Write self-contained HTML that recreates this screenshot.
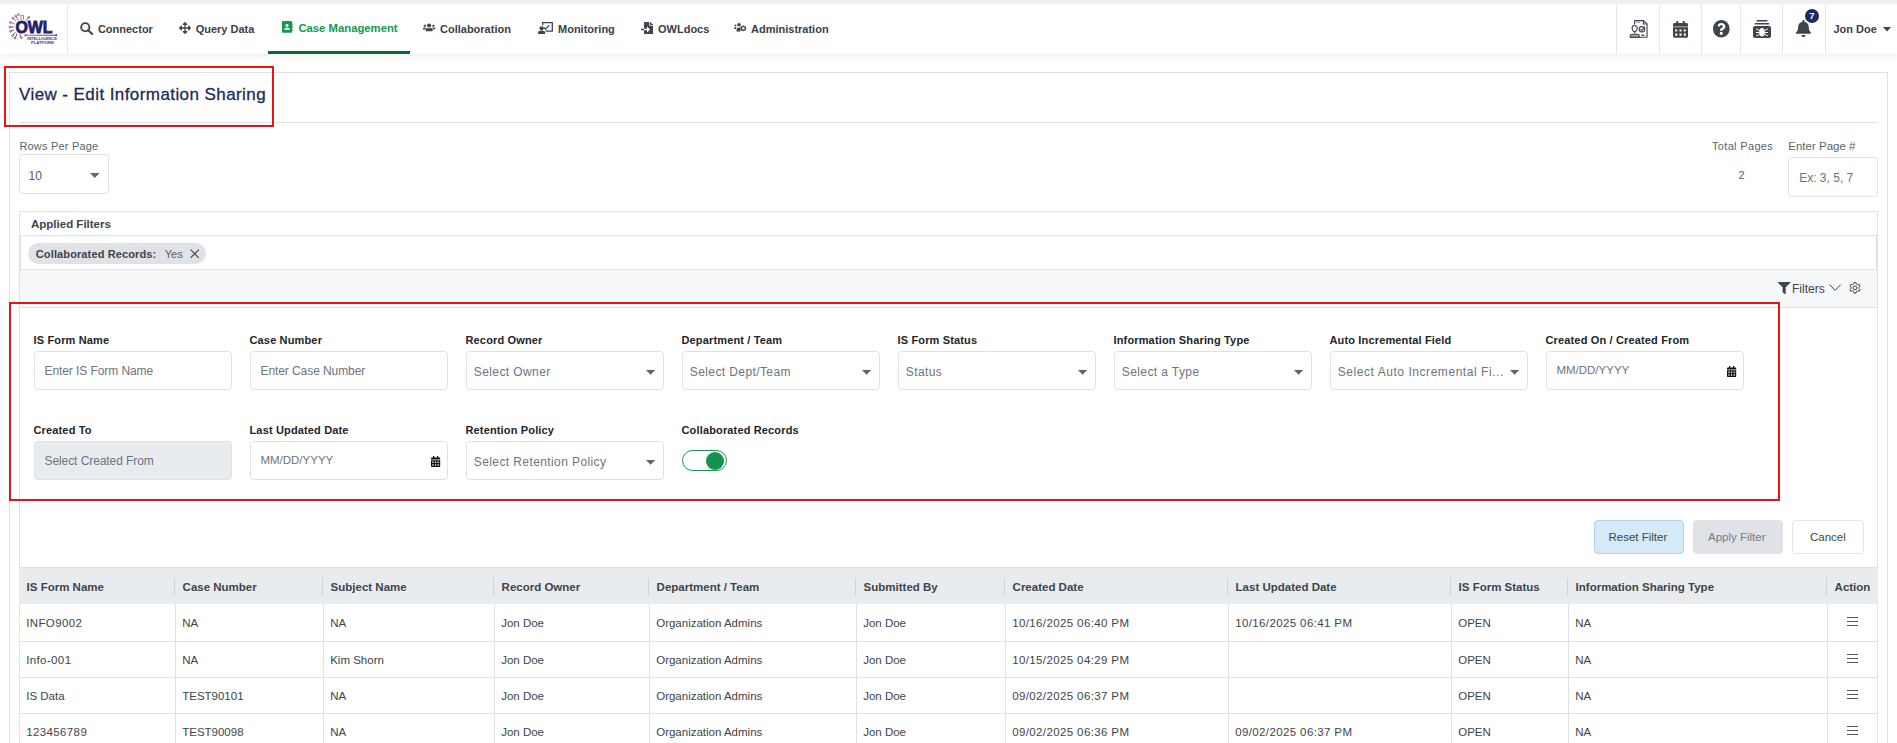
<!DOCTYPE html><html><head><meta charset="utf-8"><style>
html,body{margin:0;padding:0;}
body{width:1897px;height:743px;overflow:hidden;position:relative;background:#fff;font-family:"Liberation Sans", sans-serif;}
.t{position:absolute;white-space:nowrap;}
.r{position:absolute;box-sizing:border-box;}
svg{position:absolute;overflow:visible;}
</style></head><body>
<div class="r" style="left:0px;top:0px;width:1897px;height:4px;background:#f1f1f1;"></div>
<div class="r" style="left:0px;top:4px;width:1897px;height:50px;background:#fff;border-top-left-radius:12px;box-shadow:0 3px 6px rgba(0,0,0,0.06);"></div>
<div class="r" style="left:67px;top:4px;width:1px;height:50px;background:#e3e6ea;"></div>
<div class="t" style="left:97.9px;top:23.69px;font-size:11px;line-height:11px;color:#3a4048;font-weight:bold;">Connector</div>
<div class="t" style="left:195.7px;top:23.69px;font-size:11px;line-height:11px;color:#3a4048;font-weight:bold;">Query Data</div>
<div class="t" style="left:298.4px;top:22.73px;font-size:11.3px;line-height:11.3px;color:#129a4f;font-weight:bold;">Case Management</div>
<div class="t" style="left:440px;top:23.69px;font-size:11px;line-height:11px;color:#3a4048;font-weight:bold;">Collaboration</div>
<div class="t" style="left:558px;top:23.69px;font-size:11px;line-height:11px;color:#3a4048;font-weight:bold;">Monitoring</div>
<div class="t" style="left:658px;top:23.69px;font-size:11px;line-height:11px;color:#3a4048;font-weight:bold;">OWLdocs</div>
<div class="t" style="left:751px;top:23.69px;font-size:11px;line-height:11px;color:#3a4048;font-weight:bold;">Administration</div>
<div class="r" style="left:268px;top:51px;width:142px;height:3px;background:#086a33;"></div>
<div class="r" style="left:1616px;top:4px;width:1px;height:50px;background:#e3e6ea;"></div>
<div class="r" style="left:1659px;top:4px;width:1px;height:50px;background:#e3e6ea;"></div>
<div class="r" style="left:1701px;top:4px;width:1px;height:50px;background:#e3e6ea;"></div>
<div class="r" style="left:1740px;top:4px;width:1px;height:50px;background:#e3e6ea;"></div>
<div class="r" style="left:1782px;top:4px;width:1px;height:50px;background:#e3e6ea;"></div>
<div class="r" style="left:1825px;top:4px;width:1px;height:50px;background:#e3e6ea;"></div>
<div class="t" style="left:1833.4px;top:23.79px;font-size:11px;line-height:11px;color:#3a4048;font-weight:bold;">Jon Doe</div>
<div class="r" style="left:9px;top:72px;width:1879px;height:700px;border:1px solid #dee2e6;background:#fff;"></div>
<div class="t" style="left:19px;top:86.41px;font-size:17px;line-height:17px;color:#1c2a5c;letter-spacing:0.42px;-webkit-text-stroke:0.3px #1c2a5c;">View - Edit Information Sharing</div>
<div class="r" style="left:19px;top:122px;width:1859px;height:1px;background:#dee2e6;"></div>
<div class="t" style="left:19.4px;top:140.69px;font-size:11px;line-height:11px;color:#5c636b;letter-spacing:0.2px;">Rows Per Page</div>
<div class="r" style="left:19px;top:154px;width:90px;height:40px;border:1px solid #dee2e6;border-radius:4px;"></div>
<div class="t" style="left:28.4px;top:169.84px;font-size:12px;line-height:12px;color:#555c64;letter-spacing:0.3px;">10</div>
<svg style="left:90px;top:172.7px" width="9.60" height="5.00" viewBox="0 0 10 5" preserveAspectRatio="none"><path d="M0 0 H10 L5 5Z" fill="#666"/></svg>
<div class="t" style="left:1712px;top:140.69px;font-size:11px;line-height:11px;color:#5c636b;letter-spacing:0.33px;">Total Pages</div>
<div class="t" style="left:1541.5px;width:400px;text-align:center;top:170.29px;font-size:11px;line-height:11px;color:#5c636b;">2</div>
<div class="t" style="left:1788.3px;top:141.16px;font-size:11.5px;line-height:11.5px;color:#5c636b;">Enter Page #</div>
<div class="r" style="left:1788px;top:157px;width:90px;height:40px;border:1px solid #dee2e6;border-radius:4px;"></div>
<div class="t" style="left:1799.2px;top:171.64px;font-size:12px;line-height:12px;color:#6c737b;">Ex: 3, 5, 7</div>
<div class="r" style="left:19px;top:211px;width:1859px;height:600px;border:1px solid #dee2e6;"></div>
<div class="t" style="left:31px;top:218.56px;font-size:11.5px;line-height:11.5px;color:#3e444b;font-weight:bold;">Applied Filters</div>
<div class="r" style="left:19px;top:235px;width:1859px;height:1px;background:#dee2e6;"></div>
<div class="r" style="left:20px;top:235px;width:1857px;height:35px;border-left:1px solid #dee2e6;border-right:1px solid #dee2e6;"></div>
<div class="r" style="left:19px;top:269px;width:1859px;height:1px;background:#dee2e6;"></div>
<div class="r" style="left:28px;top:243px;width:178px;height:21px;background:#dfe2e6;border-radius:11px;"></div>
<div class="t" style="left:35.8px;top:249.19px;font-size:11px;line-height:11px;color:#3e444b;font-weight:bold;letter-spacing:0.12px;">Collaborated Records:</div>
<div class="t" style="left:164.8px;top:249.19px;font-size:11px;line-height:11px;color:#555c64;">Yes</div>
<div class="r" style="left:20px;top:270px;width:1857px;height:37px;background:#f6f7f9;"></div>
<div class="r" style="left:19px;top:307px;width:1859px;height:1px;background:#dee2e6;"></div>
<div class="t" style="left:1792px;top:282.54px;font-size:12px;line-height:12px;color:#3e444b;">Filters</div>
<div class="t" style="left:33.5px;top:334.99px;font-size:11px;line-height:11px;color:#212529;font-weight:bold;letter-spacing:0.15px;">IS Form Name</div>
<div class="r" style="left:34px;top:351px;width:198px;height:39px;border:1px solid #dee2e6;border-radius:4px;background:#fff;"></div>
<div class="t" style="left:44.5px;top:365.04px;font-size:12px;line-height:12px;color:#6c757d;letter-spacing:-0.08px;">Enter IS Form Name</div>
<div class="t" style="left:249.5px;top:334.99px;font-size:11px;line-height:11px;color:#212529;font-weight:bold;letter-spacing:0.15px;">Case Number</div>
<div class="r" style="left:250px;top:351px;width:198px;height:39px;border:1px solid #dee2e6;border-radius:4px;background:#fff;"></div>
<div class="t" style="left:260.5px;top:365.04px;font-size:12px;line-height:12px;color:#6c757d;letter-spacing:-0.08px;">Enter Case Number</div>
<div class="t" style="left:465.5px;top:334.99px;font-size:11px;line-height:11px;color:#212529;font-weight:bold;letter-spacing:0.15px;">Record Owner</div>
<div class="r" style="left:466px;top:351px;width:198px;height:39px;border:1px solid #dee2e6;border-radius:4px;background:#fff;"></div>
<div class="t" style="left:473.8px;top:366.44px;font-size:12px;line-height:12px;color:#6c757d;letter-spacing:0.4px;">Select Owner</div>
<svg style="left:645.6px;top:370px" width="9.20" height="4.80" viewBox="0 0 10 5" preserveAspectRatio="none"><path d="M0 0 H10 L5 5Z" fill="#666"/></svg>
<div class="t" style="left:681.5px;top:334.99px;font-size:11px;line-height:11px;color:#212529;font-weight:bold;letter-spacing:0.15px;">Department / Team</div>
<div class="r" style="left:682px;top:351px;width:198px;height:39px;border:1px solid #dee2e6;border-radius:4px;background:#fff;"></div>
<div class="t" style="left:689.8px;top:366.44px;font-size:12px;line-height:12px;color:#6c757d;letter-spacing:0.4px;">Select Dept/Team</div>
<svg style="left:861.6px;top:370px" width="9.20" height="4.80" viewBox="0 0 10 5" preserveAspectRatio="none"><path d="M0 0 H10 L5 5Z" fill="#666"/></svg>
<div class="t" style="left:897.5px;top:334.99px;font-size:11px;line-height:11px;color:#212529;font-weight:bold;letter-spacing:0.15px;">IS Form Status</div>
<div class="r" style="left:898px;top:351px;width:198px;height:39px;border:1px solid #dee2e6;border-radius:4px;background:#fff;"></div>
<div class="t" style="left:905.8px;top:366.44px;font-size:12px;line-height:12px;color:#6c757d;letter-spacing:0.4px;">Status</div>
<svg style="left:1077.6px;top:370px" width="9.20" height="4.80" viewBox="0 0 10 5" preserveAspectRatio="none"><path d="M0 0 H10 L5 5Z" fill="#666"/></svg>
<div class="t" style="left:1113.5px;top:334.99px;font-size:11px;line-height:11px;color:#212529;font-weight:bold;letter-spacing:0.15px;">Information Sharing Type</div>
<div class="r" style="left:1114px;top:351px;width:198px;height:39px;border:1px solid #dee2e6;border-radius:4px;background:#fff;"></div>
<div class="t" style="left:1121.8px;top:366.44px;font-size:12px;line-height:12px;color:#6c757d;letter-spacing:0.4px;">Select a Type</div>
<svg style="left:1293.6px;top:370px" width="9.20" height="4.80" viewBox="0 0 10 5" preserveAspectRatio="none"><path d="M0 0 H10 L5 5Z" fill="#666"/></svg>
<div class="t" style="left:1329.5px;top:334.99px;font-size:11px;line-height:11px;color:#212529;font-weight:bold;letter-spacing:0.15px;">Auto Incremental Field</div>
<div class="r" style="left:1330px;top:351px;width:198px;height:39px;border:1px solid #dee2e6;border-radius:4px;background:#fff;"></div>
<div class="t" style="left:1337.8px;top:366.44px;font-size:12px;line-height:12px;color:#6c757d;letter-spacing:0.55px;">Select Auto Incremental Fi...</div>
<svg style="left:1509.6px;top:370px" width="9.20" height="4.80" viewBox="0 0 10 5" preserveAspectRatio="none"><path d="M0 0 H10 L5 5Z" fill="#666"/></svg>
<div class="t" style="left:1545.5px;top:334.99px;font-size:11px;line-height:11px;color:#212529;font-weight:bold;letter-spacing:0.15px;">Created On / Created From</div>
<div class="r" style="left:1546px;top:351px;width:198px;height:39px;border:1px solid #dee2e6;border-radius:4px;background:#fff;"></div>
<div class="t" style="left:1556.4px;top:365.26px;font-size:11.5px;line-height:11.5px;color:#6c757d;">MM/DD/YYYY</div>
<svg style="left:1726.8px;top:366px" width="9.20" height="11.00" viewBox="0 0 448 512" preserveAspectRatio="none"><path d="M0 464c0 26.5 21.5 48 48 48h352c26.5 0 48-21.5 48-48V192H0v272zm320-196c0-6.6 5.4-12 12-12h40c6.6 0 12 5.4 12 12v40c0 6.6-5.4 12-12 12h-40c-6.6 0-12-5.4-12-12v-40zm0 128c0-6.6 5.4-12 12-12h40c6.6 0 12 5.4 12 12v40c0 6.6-5.4 12-12 12h-40c-6.6 0-12-5.4-12-12v-40zM192 268c0-6.6 5.4-12 12-12h40c6.6 0 12 5.4 12 12v40c0 6.6-5.4 12-12 12h-40c-6.6 0-12-5.4-12-12v-40zm0 128c0-6.6 5.4-12 12-12h40c6.6 0 12 5.4 12 12v40c0 6.6-5.4 12-12 12h-40c-6.6 0-12-5.4-12-12v-40zM64 268c0-6.6 5.4-12 12-12h40c6.6 0 12 5.4 12 12v40c0 6.6-5.4 12-12 12H76c-6.6 0-12-5.4-12-12v-40zm0 128c0-6.6 5.4-12 12-12h40c6.6 0 12 5.4 12 12v40c0 6.6-5.4 12-12 12H76c-6.6 0-12-5.4-12-12v-40zM400 64h-48V16c0-8.8-7.2-16-16-16h-32c-8.8 0-16 7.2-16 16v48H160V16c0-8.8-7.2-16-16-16h-32c-8.8 0-16 7.2-16 16v48H48C21.5 64 0 85.5 0 112v48h448v-48c0-26.5-21.5-48-48-48z" fill="#111"/></svg>
<div class="t" style="left:33.5px;top:424.79px;font-size:11px;line-height:11px;color:#212529;font-weight:bold;letter-spacing:0.15px;">Created To</div>
<div class="r" style="left:34px;top:441px;width:198px;height:39px;border:1px solid #dee2e6;border-radius:4px;background:#e9ecef;"></div>
<div class="t" style="left:44.5px;top:455.04px;font-size:12px;line-height:12px;color:#6c757d;letter-spacing:-0.08px;">Select Created From</div>
<div class="t" style="left:249.5px;top:424.79px;font-size:11px;line-height:11px;color:#212529;font-weight:bold;letter-spacing:0.15px;">Last Updated Date</div>
<div class="r" style="left:250px;top:441px;width:198px;height:39px;border:1px solid #dee2e6;border-radius:4px;background:#fff;"></div>
<div class="t" style="left:260.4px;top:455.26px;font-size:11.5px;line-height:11.5px;color:#6c757d;">MM/DD/YYYY</div>
<svg style="left:430.8px;top:456px" width="9.20" height="11.00" viewBox="0 0 448 512" preserveAspectRatio="none"><path d="M0 464c0 26.5 21.5 48 48 48h352c26.5 0 48-21.5 48-48V192H0v272zm320-196c0-6.6 5.4-12 12-12h40c6.6 0 12 5.4 12 12v40c0 6.6-5.4 12-12 12h-40c-6.6 0-12-5.4-12-12v-40zm0 128c0-6.6 5.4-12 12-12h40c6.6 0 12 5.4 12 12v40c0 6.6-5.4 12-12 12h-40c-6.6 0-12-5.4-12-12v-40zM192 268c0-6.6 5.4-12 12-12h40c6.6 0 12 5.4 12 12v40c0 6.6-5.4 12-12 12h-40c-6.6 0-12-5.4-12-12v-40zm0 128c0-6.6 5.4-12 12-12h40c6.6 0 12 5.4 12 12v40c0 6.6-5.4 12-12 12h-40c-6.6 0-12-5.4-12-12v-40zM64 268c0-6.6 5.4-12 12-12h40c6.6 0 12 5.4 12 12v40c0 6.6-5.4 12-12 12H76c-6.6 0-12-5.4-12-12v-40zm0 128c0-6.6 5.4-12 12-12h40c6.6 0 12 5.4 12 12v40c0 6.6-5.4 12-12 12H76c-6.6 0-12-5.4-12-12v-40zM400 64h-48V16c0-8.8-7.2-16-16-16h-32c-8.8 0-16 7.2-16 16v48H160V16c0-8.8-7.2-16-16-16h-32c-8.8 0-16 7.2-16 16v48H48C21.5 64 0 85.5 0 112v48h448v-48c0-26.5-21.5-48-48-48z" fill="#111"/></svg>
<div class="t" style="left:465.5px;top:424.79px;font-size:11px;line-height:11px;color:#212529;font-weight:bold;letter-spacing:0.15px;">Retention Policy</div>
<div class="r" style="left:466px;top:441px;width:198px;height:39px;border:1px solid #dee2e6;border-radius:4px;background:#fff;"></div>
<div class="t" style="left:473.8px;top:456.44px;font-size:12px;line-height:12px;color:#6c757d;letter-spacing:0.4px;">Select Retention Policy</div>
<svg style="left:645.6px;top:460px" width="9.20" height="4.80" viewBox="0 0 10 5" preserveAspectRatio="none"><path d="M0 0 H10 L5 5Z" fill="#666"/></svg>
<div class="t" style="left:681.5px;top:424.79px;font-size:11px;line-height:11px;color:#212529;font-weight:bold;letter-spacing:0.15px;">Collaborated Records</div>
<div class="r" style="left:682px;top:450px;width:45px;height:21px;border:1px solid #15924f;border-radius:11px;background:#fff;"></div>
<div class="r" style="left:705.5px;top:452px;width:18px;height:18px;background:#15924f;border-radius:50%;"></div>
<div class="r" style="left:4px;top:66px;width:270px;height:60.6px;border:2px solid #e8141c;"></div>
<div class="r" style="left:9px;top:302px;width:1771px;height:198.5px;border:2px solid #e8141c;"></div>
<div class="r" style="left:1594px;top:520px;width:90px;height:34px;background:#d4ebf7;border:1px solid #a9d4ef;border-radius:4px;"></div>
<div class="t" style="left:1608.5px;top:531.76px;font-size:11.5px;line-height:11.5px;color:#3e444b;">Reset Filter</div>
<div class="r" style="left:1693px;top:520px;width:90px;height:34px;background:#dfe2e6;border-radius:4px;"></div>
<div class="t" style="left:1708px;top:531.76px;font-size:11.5px;line-height:11.5px;color:#737c86;">Apply Filter</div>
<div class="r" style="left:1792px;top:520px;width:72px;height:34px;background:#fff;border:1px solid #e3e6ea;border-radius:4px;"></div>
<div class="t" style="left:1810px;top:531.76px;font-size:11.5px;line-height:11.5px;color:#3e444b;">Cancel</div>
<div class="r" style="left:19px;top:567px;width:1859px;height:37px;background:#e9ecef;border-top:1px solid #dde1e5;"></div>
<div class="t" style="left:26.6px;top:582.26px;font-size:11.5px;line-height:11.5px;color:#3e444b;font-weight:bold;">IS Form Name</div>
<div class="t" style="left:182.6px;top:582.26px;font-size:11.5px;line-height:11.5px;color:#3e444b;font-weight:bold;">Case Number</div>
<div class="r" style="left:174px;top:578px;width:1px;height:18px;background:#cdd3d9;"></div>
<div class="t" style="left:330.6px;top:582.26px;font-size:11.5px;line-height:11.5px;color:#3e444b;font-weight:bold;">Subject Name</div>
<div class="r" style="left:322px;top:578px;width:1px;height:18px;background:#cdd3d9;"></div>
<div class="t" style="left:501.6px;top:582.26px;font-size:11.5px;line-height:11.5px;color:#3e444b;font-weight:bold;">Record Owner</div>
<div class="r" style="left:493px;top:578px;width:1px;height:18px;background:#cdd3d9;"></div>
<div class="t" style="left:656.6px;top:582.26px;font-size:11.5px;line-height:11.5px;color:#3e444b;font-weight:bold;">Department / Team</div>
<div class="r" style="left:648px;top:578px;width:1px;height:18px;background:#cdd3d9;"></div>
<div class="t" style="left:863.6px;top:582.26px;font-size:11.5px;line-height:11.5px;color:#3e444b;font-weight:bold;">Submitted By</div>
<div class="r" style="left:855px;top:578px;width:1px;height:18px;background:#cdd3d9;"></div>
<div class="t" style="left:1012.6px;top:582.26px;font-size:11.5px;line-height:11.5px;color:#3e444b;font-weight:bold;">Created Date</div>
<div class="r" style="left:1004px;top:578px;width:1px;height:18px;background:#cdd3d9;"></div>
<div class="t" style="left:1235.6px;top:582.26px;font-size:11.5px;line-height:11.5px;color:#3e444b;font-weight:bold;">Last Updated Date</div>
<div class="r" style="left:1227px;top:578px;width:1px;height:18px;background:#cdd3d9;"></div>
<div class="t" style="left:1458.6px;top:582.26px;font-size:11.5px;line-height:11.5px;color:#3e444b;font-weight:bold;">IS Form Status</div>
<div class="r" style="left:1450px;top:578px;width:1px;height:18px;background:#cdd3d9;"></div>
<div class="t" style="left:1575.6px;top:582.26px;font-size:11.5px;line-height:11.5px;color:#3e444b;font-weight:bold;">Information Sharing Type</div>
<div class="r" style="left:1567px;top:578px;width:1px;height:18px;background:#cdd3d9;"></div>
<div class="t" style="left:1834.6px;top:582.26px;font-size:11.5px;line-height:11.5px;color:#3e444b;font-weight:bold;">Action</div>
<div class="r" style="left:1826px;top:578px;width:1px;height:18px;background:#cdd3d9;"></div>
<div class="r" style="left:19px;top:641px;width:1859px;height:1px;background:#dee2e6;"></div>
<div class="r" style="left:19px;top:677px;width:1859px;height:1px;background:#dee2e6;"></div>
<div class="r" style="left:19px;top:713px;width:1859px;height:1px;background:#dee2e6;"></div>
<div class="t" style="left:26.2px;top:618.16px;font-size:11.5px;line-height:11.5px;color:#3e444b;letter-spacing:0.38px;">INFO9002</div>
<div class="t" style="left:182.2px;top:618.16px;font-size:11.5px;line-height:11.5px;color:#3e444b;">NA</div>
<div class="t" style="left:330.2px;top:618.16px;font-size:11.5px;line-height:11.5px;color:#3e444b;">NA</div>
<div class="t" style="left:501.2px;top:618.16px;font-size:11.5px;line-height:11.5px;color:#3e444b;">Jon Doe</div>
<div class="t" style="left:656.2px;top:618.16px;font-size:11.5px;line-height:11.5px;color:#3e444b;">Organization Admins</div>
<div class="t" style="left:863.2px;top:618.16px;font-size:11.5px;line-height:11.5px;color:#3e444b;">Jon Doe</div>
<div class="t" style="left:1012.2px;top:618.16px;font-size:11.5px;line-height:11.5px;color:#3e444b;letter-spacing:0.38px;">10/16/2025 06:40 PM</div>
<div class="t" style="left:1235.2px;top:618.16px;font-size:11.5px;line-height:11.5px;color:#3e444b;letter-spacing:0.38px;">10/16/2025 06:41 PM</div>
<div class="t" style="left:1458.2px;top:618.16px;font-size:11.5px;line-height:11.5px;color:#3e444b;">OPEN</div>
<div class="t" style="left:1575.2px;top:618.16px;font-size:11.5px;line-height:11.5px;color:#3e444b;">NA</div>
<svg style="left:1847px;top:616px" width="11.00" height="10.00" viewBox="0 0 11 10" preserveAspectRatio="none"><path d="M0 1.5 H11 M0 5.5 H11 M0 9.5 H11" stroke="#50565c" stroke-width="1"/></svg>
<div class="t" style="left:26.2px;top:654.86px;font-size:11.5px;line-height:11.5px;color:#3e444b;letter-spacing:0.38px;">Info-001</div>
<div class="t" style="left:182.2px;top:654.86px;font-size:11.5px;line-height:11.5px;color:#3e444b;">NA</div>
<div class="t" style="left:330.2px;top:654.86px;font-size:11.5px;line-height:11.5px;color:#3e444b;">Kim Shorn</div>
<div class="t" style="left:501.2px;top:654.86px;font-size:11.5px;line-height:11.5px;color:#3e444b;">Jon Doe</div>
<div class="t" style="left:656.2px;top:654.86px;font-size:11.5px;line-height:11.5px;color:#3e444b;">Organization Admins</div>
<div class="t" style="left:863.2px;top:654.86px;font-size:11.5px;line-height:11.5px;color:#3e444b;">Jon Doe</div>
<div class="t" style="left:1012.2px;top:654.86px;font-size:11.5px;line-height:11.5px;color:#3e444b;letter-spacing:0.38px;">10/15/2025 04:29 PM</div>
<div class="t" style="left:1235.2px;top:654.86px;font-size:11.5px;line-height:11.5px;color:#3e444b;"></div>
<div class="t" style="left:1458.2px;top:654.86px;font-size:11.5px;line-height:11.5px;color:#3e444b;">OPEN</div>
<div class="t" style="left:1575.2px;top:654.86px;font-size:11.5px;line-height:11.5px;color:#3e444b;">NA</div>
<svg style="left:1847px;top:653px" width="11.00" height="10.00" viewBox="0 0 11 10" preserveAspectRatio="none"><path d="M0 1.5 H11 M0 5.5 H11 M0 9.5 H11" stroke="#50565c" stroke-width="1"/></svg>
<div class="t" style="left:26.2px;top:690.86px;font-size:11.5px;line-height:11.5px;color:#3e444b;">IS Data</div>
<div class="t" style="left:182.2px;top:690.86px;font-size:11.5px;line-height:11.5px;color:#3e444b;">TEST90101</div>
<div class="t" style="left:330.2px;top:690.86px;font-size:11.5px;line-height:11.5px;color:#3e444b;">NA</div>
<div class="t" style="left:501.2px;top:690.86px;font-size:11.5px;line-height:11.5px;color:#3e444b;">Jon Doe</div>
<div class="t" style="left:656.2px;top:690.86px;font-size:11.5px;line-height:11.5px;color:#3e444b;">Organization Admins</div>
<div class="t" style="left:863.2px;top:690.86px;font-size:11.5px;line-height:11.5px;color:#3e444b;">Jon Doe</div>
<div class="t" style="left:1012.2px;top:690.86px;font-size:11.5px;line-height:11.5px;color:#3e444b;letter-spacing:0.38px;">09/02/2025 06:37 PM</div>
<div class="t" style="left:1235.2px;top:690.86px;font-size:11.5px;line-height:11.5px;color:#3e444b;"></div>
<div class="t" style="left:1458.2px;top:690.86px;font-size:11.5px;line-height:11.5px;color:#3e444b;">OPEN</div>
<div class="t" style="left:1575.2px;top:690.86px;font-size:11.5px;line-height:11.5px;color:#3e444b;">NA</div>
<svg style="left:1847px;top:689px" width="11.00" height="10.00" viewBox="0 0 11 10" preserveAspectRatio="none"><path d="M0 1.5 H11 M0 5.5 H11 M0 9.5 H11" stroke="#50565c" stroke-width="1"/></svg>
<div class="t" style="left:26.2px;top:726.86px;font-size:11.5px;line-height:11.5px;color:#3e444b;letter-spacing:0.38px;">123456789</div>
<div class="t" style="left:182.2px;top:726.86px;font-size:11.5px;line-height:11.5px;color:#3e444b;">TEST90098</div>
<div class="t" style="left:330.2px;top:726.86px;font-size:11.5px;line-height:11.5px;color:#3e444b;">NA</div>
<div class="t" style="left:501.2px;top:726.86px;font-size:11.5px;line-height:11.5px;color:#3e444b;">Jon Doe</div>
<div class="t" style="left:656.2px;top:726.86px;font-size:11.5px;line-height:11.5px;color:#3e444b;">Organization Admins</div>
<div class="t" style="left:863.2px;top:726.86px;font-size:11.5px;line-height:11.5px;color:#3e444b;">Jon Doe</div>
<div class="t" style="left:1012.2px;top:726.86px;font-size:11.5px;line-height:11.5px;color:#3e444b;letter-spacing:0.38px;">09/02/2025 06:36 PM</div>
<div class="t" style="left:1235.2px;top:726.86px;font-size:11.5px;line-height:11.5px;color:#3e444b;letter-spacing:0.38px;">09/02/2025 06:37 PM</div>
<div class="t" style="left:1458.2px;top:726.86px;font-size:11.5px;line-height:11.5px;color:#3e444b;">OPEN</div>
<div class="t" style="left:1575.2px;top:726.86px;font-size:11.5px;line-height:11.5px;color:#3e444b;">NA</div>
<svg style="left:1847px;top:725px" width="11.00" height="10.00" viewBox="0 0 11 10" preserveAspectRatio="none"><path d="M0 1.5 H11 M0 5.5 H11 M0 9.5 H11" stroke="#50565c" stroke-width="1"/></svg>
<div class="r" style="left:175px;top:604px;width:1px;height:200px;background:#dee2e6;"></div>
<div class="r" style="left:323px;top:604px;width:1px;height:200px;background:#dee2e6;"></div>
<div class="r" style="left:494px;top:604px;width:1px;height:200px;background:#dee2e6;"></div>
<div class="r" style="left:649px;top:604px;width:1px;height:200px;background:#dee2e6;"></div>
<div class="r" style="left:856px;top:604px;width:1px;height:200px;background:#dee2e6;"></div>
<div class="r" style="left:1005px;top:604px;width:1px;height:200px;background:#dee2e6;"></div>
<div class="r" style="left:1228px;top:604px;width:1px;height:200px;background:#dee2e6;"></div>
<div class="r" style="left:1451px;top:604px;width:1px;height:200px;background:#dee2e6;"></div>
<div class="r" style="left:1568px;top:604px;width:1px;height:200px;background:#dee2e6;"></div>
<div class="r" style="left:1827px;top:604px;width:1px;height:200px;background:#dee2e6;"></div>
<svg style="left:0px;top:0px" width="67.00" height="54.00" viewBox="0 0 67 54" preserveAspectRatio="none">
<defs><linearGradient id="lg" x1="0" x2="1"><stop offset="0" stop-color="#e0405a"/><stop offset="1" stop-color="#2a2a7a"/></linearGradient>
<linearGradient id="lg2" x1="0" y1="0" x2="0" y2="1"><stop offset="0" stop-color="#e05a6a"/><stop offset="1" stop-color="#3a3a88"/></linearGradient></defs>
<text x="15.4" y="33.0" font-family="Liberation Sans" font-weight="bold" font-size="15.8" fill="#1f1f6e" stroke="#1f1f6e" stroke-width="0.8" textLength="37.2" lengthAdjust="spacingAndGlyphs">OWL</text>
<g stroke="url(#lg2)" stroke-width="0.9" fill="none">
<path d="M14.5 24 L11 22.5 M14 27 L10.5 27 M14.2 30 L11 31 M15.5 32.5 L13 35 M17 33.5 L15.5 37.5 M19.5 34 L21 37 M16 21.5 L13.5 18.5 M18 20.5 L16 16.5 M21 19.8 L21 15.5 L23.5 15.5 L23.5 19.5 M25.5 20.5 L28.5 17.5"/>
<circle cx="10.5" cy="22.3" r="0.9"/><circle cx="10" cy="27" r="0.9"/><circle cx="10.5" cy="31.2" r="0.9"/><circle cx="12.5" cy="35.5" r="0.9"/>
<circle cx="15" cy="38" r="0.9"/><circle cx="21.3" cy="37.5" r="0.9"/><circle cx="13" cy="18" r="0.9"/><circle cx="15.8" cy="15.8" r="0.9"/><circle cx="18.5" cy="14.5" r="0.9"/><circle cx="28.8" cy="17.2" r="0.9"/>
</g>
<rect x="25" y="34.75" width="31.5" height="0.9" fill="url(#lg)"/><circle cx="25.5" cy="35.2" r="1" fill="none" stroke="#e0405a" stroke-width="0.8"/><circle cx="56.3" cy="35.2" r="0.9" fill="#2a2a7a"/>
<text x="27" y="39.9" font-family="Liberation Sans" font-weight="bold" font-size="3.4" fill="#3a3a88" textLength="30" lengthAdjust="spacingAndGlyphs">INTELLIGENCE</text>
<text x="31" y="43.6" font-family="Liberation Sans" font-weight="bold" font-size="3.4" fill="#3a3a88" textLength="22.7" lengthAdjust="spacingAndGlyphs">PLATFORM</text>
</svg>
<svg style="left:80px;top:22px" width="13.00" height="12.50" viewBox="0 0 13 12.5" preserveAspectRatio="none"><circle cx="5.3" cy="5.2" r="4.1" fill="none" stroke="#3f454c" stroke-width="1.9"/><path d="M8.2 8.2 L12.2 12" stroke="#3f454c" stroke-width="2.1" stroke-linecap="round"/></svg>
<svg style="left:178.5px;top:22px" width="12.00" height="12.00" viewBox="0 0 512 512" preserveAspectRatio="none"><path d="M352.201 425.775l-79.196 79.196c-9.373 9.373-24.568 9.373-33.941 0l-79.196-79.196c-15.119-15.119-4.411-40.971 16.971-40.97h51.162L228 284H127.196v51.162c0 21.382-25.851 32.090-40.971 16.971L7.029 272.937c-9.373-9.373-9.373-24.569 0-33.941L86.225 159.800c15.119-15.119 40.971-4.411 40.971 16.971V228H228V127.196h-51.230c-21.382 0-32.090-25.851-16.971-40.971l79.196-79.196c9.373-9.373 24.568-9.373 33.941 0l79.196 79.196c15.119 15.119 4.411 40.971-16.971 40.971h-51.162V228h100.804v-51.162c0-21.382 25.851-32.090 40.970-16.971l79.196 79.196c9.373 9.373 9.373 24.569 0 33.941L425.773 352.200c-15.119 15.119-40.971 4.411-40.970-16.971V284H284v100.804h51.230c21.382 0 32.090 25.851 16.971 40.971z" fill="#3f454c"/></svg>
<svg style="left:281.8px;top:21px" width="10.80" height="11.80" viewBox="0 0 448 512" preserveAspectRatio="none"><path d="M436 160c6.6 0 12-5.4 12-12v-40c0-6.6-5.4-12-12-12h-20V48c0-26.5-21.5-48-48-48H48C21.5 0 0 21.5 0 48v416c0 26.5 21.5 48 48 48h320c26.5 0 48-21.5 48-48v-48h20c6.6 0 12-5.4 12-12v-40c0-6.6-5.4-12-12-12h-20v-64h20c6.6 0 12-5.4 12-12v-40c0-6.6-5.4-12-12-12h-20v-64h20zm-228-32c35.3 0 64 28.7 64 64s-28.7 64-64 64-64-28.7-64-64 28.7-64 64-64zm112 236.8c0 10.6-10 19.2-22.4 19.2H118.4C106 384 96 375.4 96 364.8v-19.2c0-31.8 30.1-57.6 67.2-57.6h5c12.3 5.1 25.7 8 39.8 8s27.6-2.9 39.8-8h5c37.1 0 67.2 25.8 67.2 57.6v19.2z" fill="#129a4f"/></svg>
<svg style="left:423px;top:23.2px" width="12.30" height="8.80" viewBox="0 0 640 512" preserveAspectRatio="none"><path d="M96 224c35.3 0 64-28.7 64-64s-28.7-64-64-64-64 28.7-64 64 28.7 64 64 64zm448 0c35.3 0 64-28.7 64-64s-28.7-64-64-64-64 28.7-64 64 28.7 64 64 64zm32 32h-64c-17.6 0-33.5 7.1-45.1 18.6 40.3 22.1 68.9 62 75.1 109.4h66c17.7 0 32-14.3 32-32v-32c0-35.3-28.7-64-64-64zm-256 0c61.9 0 112-50.1 112-112S381.9 32 320 32 208 82.1 208 144s50.1 112 112 112zm76.8 32h-8.3c-20.8 10-43.9 16-68.5 16s-47.6-6-68.5-16h-8.3C179.6 288 128 339.6 128 403.2V432c0 26.5 21.5 48 48 48h288c26.5 0 48-21.5 48-48v-28.8c0-63.6-51.6-115.2-115.2-115.2zm-223.7-13.4C161.5 263.1 145.6 256 128 256H64c-35.3 0-64 28.7-64 64v32c0 17.7 14.3 32 32 32h65.9c6.3-47.4 34.9-87.3 75.2-109.4z" fill="#3f454c"/></svg>
<svg style="left:538px;top:22px" width="15.00" height="12.00" viewBox="0 0 15 12" preserveAspectRatio="none"><path d="M4.6 3.2 V0.7 H14.3 V9.2 H7.6" fill="none" stroke="#3f454c" stroke-width="1.3"/><path d="M5.6 5.6 L7.6 7.1 L11.2 3.2" fill="none" stroke="#3f454c" stroke-width="1.2"/><circle cx="3.6" cy="6.3" r="2.1" fill="#3f454c"/><path d="M0 12 V11 Q0 8.7 2.4 8.7 H4.8 Q7.2 8.7 7.2 11 V12Z" fill="#3f454c"/></svg>
<svg style="left:641px;top:22px" width="12.00" height="12.00" viewBox="0 0 512 512" preserveAspectRatio="none"><path d="M16 288c-8.8 0-16 7.2-16 16v32c0 8.8 7.2 16 16 16h112v-64zm489-183L407.1 7c-4.5-4.5-10.6-7-17-7H384v128h128v-6.1c0-6.3-2.5-12.4-7-16.9zm-153 31V0H152c-13.3 0-24 10.7-24 24v264h128v-65.2c0-14.3 17.3-21.4 27.4-11.3L379 308c6.6 6.7 6.6 17.4 0 24.1l-95.7 96.4c-10.1 10.1-27.4 3-27.4-11.3V352H128v136c0 13.3 10.7 24 24 24h336c13.3 0 24-10.7 24-24V160H376c-13.2 0-24-10.8-24-24z" fill="#3f454c"/></svg>
<svg style="left:733.7px;top:23.4px" width="12.10" height="8.60" viewBox="0 0 12 8.6" preserveAspectRatio="none"><circle cx="5" cy="1.8" r="1.8" fill="#3f454c"/><circle cx="1.5" cy="2.5" r="1" fill="#3f454c"/><path d="M0 5.5 Q0 4.2 1.5 4.2 L2.6 4.2 Q2 5 2 6 L0 6Z" fill="#3f454c"/><path d="M2.5 8.6 L2.5 7 Q2.5 4.6 5 4.6 L6.5 4.6 L6.5 8.6Z" fill="#3f454c"/><circle cx="9.3" cy="5.3" r="2" fill="none" stroke="#3f454c" stroke-width="1.3"/><g stroke="#3f454c" stroke-width="1.1"><path d="M9.3 2.4 V3 M9.3 7.6 V8.3 M6.4 5.3 H7 M11.6 5.3 H12.2 M7.3 3.3 L7.8 3.8 M10.8 6.8 L11.3 7.3 M7.3 7.3 L7.8 6.8 M10.8 3.8 L11.3 3.3"/></g></svg>
<svg style="left:1629px;top:20px" width="19.00" height="17.80" viewBox="0 0 18.5 17.8" preserveAspectRatio="none"><g fill="none" stroke="#3f454c" stroke-width="1.1">
<path d="M5.4 4.5 V1.2 Q5.4 0.6 6 0.6 H14 L17.6 4 V16.8 Q17.6 17.3 17 17.3 H10.5"/>
<path d="M14 0.6 V4 H17.6"/>
<circle cx="12.6" cy="9.3" r="2.7"/><path d="M11.3 9.4 L12.4 10.4 L15.5 6.8"/>
<path d="M5.5 13.6 V12 Q3 10.5 3 8.4 Q3 5.5 5.5 5.5 Q8 5.5 8 8.4 Q8 10.5 5.5 12"/>
</g>
<path d="M1.2 17.4 V15.8 Q1.2 14.2 2.8 14.2 H8.4 Q10 14.2 10 15.8 V17.4Z" fill="#9ea3a8" stroke="#3f454c" stroke-width="1.1"/>
<path d="M6.8 2.3 H10.8" stroke="#9aa0a6" stroke-width="1.2"/><path d="M11.8 15.2 H15.2" stroke="#3f454c" stroke-width="1.2"/></svg>
<svg style="left:1673px;top:21px" width="15.00" height="16.80" viewBox="0 0 448 512" preserveAspectRatio="none"><rect x="0" y="150" width="448" height="52" fill="#a9adb2"/><path d="M0 464c0 26.5 21.5 48 48 48h352c26.5 0 48-21.5 48-48V192H0v272zm320-196c0-6.6 5.4-12 12-12h40c6.6 0 12 5.4 12 12v40c0 6.6-5.4 12-12 12h-40c-6.6 0-12-5.4-12-12v-40zm0 128c0-6.6 5.4-12 12-12h40c6.6 0 12 5.4 12 12v40c0 6.6-5.4 12-12 12h-40c-6.6 0-12-5.4-12-12v-40zM192 268c0-6.6 5.4-12 12-12h40c6.6 0 12 5.4 12 12v40c0 6.6-5.4 12-12 12h-40c-6.6 0-12-5.4-12-12v-40zm0 128c0-6.6 5.4-12 12-12h40c6.6 0 12 5.4 12 12v40c0 6.6-5.4 12-12 12h-40c-6.6 0-12-5.4-12-12v-40zM64 268c0-6.6 5.4-12 12-12h40c6.6 0 12 5.4 12 12v40c0 6.6-5.4 12-12 12H76c-6.6 0-12-5.4-12-12v-40zm0 128c0-6.6 5.4-12 12-12h40c6.6 0 12 5.4 12 12v40c0 6.6-5.4 12-12 12H76c-6.6 0-12-5.4-12-12v-40zM400 64h-48V16c0-8.8-7.2-16-16-16h-32c-8.8 0-16 7.2-16 16v48H160V16c0-8.8-7.2-16-16-16h-32c-8.8 0-16 7.2-16 16v48H48C21.5 64 0 85.5 0 112v48h448v-48c0-26.5-21.5-48-48-48z" fill="#3f454c"/></svg>
<svg style="left:1712.8px;top:19.8px" width="16.60" height="17.60" viewBox="8 8 496 496" preserveAspectRatio="none"><path d="M504 256c0 136.997-111.043 248-248 248S8 392.997 8 256C8 119.083 119.043 8 256 8s248 111.083 248 248zM262.655 90c-54.497 0-89.255 22.957-116.549 63.758-3.536 5.286-2.353 12.415 2.715 16.258l34.699 26.31c5.205 3.947 12.621 3.008 16.665-2.122 17.864-22.658 30.113-35.797 57.303-35.797 20.429 0 45.698 13.148 45.698 32.958 0 14.976-12.363 22.667-32.534 33.976C247.128 238.528 216 254.941 216 296v4c0 6.627 5.373 12 12 12h56c6.627 0 12-5.373 12-12v-1.333c0-28.462 83.186-29.647 83.186-106.667 0-58.002-60.165-102-116.531-102zM256 338c-25.365 0-46 20.635-46 46 0 25.364 20.635 46 46 46s46-20.636 46-46c0-25.365-20.635-46-46-46z" fill="#3f454c"/></svg>
<svg style="left:1753px;top:19.9px" width="18.00" height="18.00" viewBox="0 0 18 18" preserveAspectRatio="none"><rect x="3.5" y="0" width="11" height="1.6" rx="0.5" fill="#3f454c"/><rect x="1.6" y="3" width="14.6" height="1.6" rx="0.5" fill="#3f454c"/>
<rect x="0" y="6" width="18" height="12" rx="2" fill="#3f454c"/>
<ellipse cx="9" cy="12.2" rx="2.8" ry="4.3" fill="#fff"/>
<g stroke="#fff" stroke-width="1"><path d="M3.2 9 L6.5 10.5 M3 12.5 H6.3 M3.2 16 L6.5 14.2 M14.8 9 L11.5 10.5 M15 12.5 H11.7 M14.8 16 L11.5 14.2"/></g></svg>
<svg style="left:1796.3px;top:20px" width="14.90" height="17.00" viewBox="0 0 448 512" preserveAspectRatio="none"><path d="M224 512c35.32 0 63.970-28.650 63.970-64H160.030c0 35.350 28.650 64 63.970 64zm215.390-149.710c-19.320-20.760-55.470-51.990-55.470-154.290 0-77.700-54.480-139.900-127.940-155.160V32c0-17.670-14.320-32-31.980-32s-31.980 14.330-31.980 32v20.840C118.560 68.100 64.080 130.300 64.080 208c0 102.300-36.150 133.530-55.470 154.290-6 6.450-8.660 14.160-8.610 21.710.110 16.400 12.980 32 32.100 32h383.800c19.120 0 32-15.600 32.100-32 .050-7.550-2.610-15.270-8.610-21.710z" fill="#3f454c"/></svg>
<div class="r" style="left:1805px;top:9px;width:14px;height:14px;border-radius:50%;background:#1b2a66;"></div>
<div class="t" style="left:1805px;top:9.3px;width:14px;text-align:center;font-size:9.5px;line-height:14px;font-weight:bold;color:#fff;">7</div>
<svg style="left:1882.7px;top:27px" width="8.10" height="4.50" viewBox="0 0 10 5" preserveAspectRatio="none"><path d="M0 0 H10 L5 5Z" fill="#3f454c"/></svg>
<svg style="left:1778px;top:282px" width="12.30" height="12.00" viewBox="0 0 512 512" preserveAspectRatio="none"><path d="M487.976 0H24.028C2.710 0-8.047 25.866 7.058 40.971L192 225.941V432c0 7.831 3.821 15.170 10.237 19.662l80 55.980C298.020 518.690 320 507.493 320 487.980V225.941l184.947-184.970C520.021 25.896 509.338 0 487.976 0z" fill="#3f454c"/></svg>
<svg style="left:1829px;top:284.3px" width="12.30" height="7.00" viewBox="0 0 12.3 7" preserveAspectRatio="none"><path d="M0.5 0.5 L6.15 6.3 L11.8 0.5" fill="none" stroke="#3f454c" stroke-width="1"/></svg>
<svg style="left:1849.3px;top:282px" width="12.00" height="12.00" viewBox="0 0 12 12" preserveAspectRatio="none"><g fill="none" stroke="#3f454c" stroke-width="1">
<path d="M5 0.6 H7 L7.4 2.1 L8.6 2.8 L10.1 2.3 L11.1 4 L10 5.1 V6.5 L11.1 7.6 L10.1 9.3 L8.6 8.8 L7.4 9.5 L7 11.1 H5 L4.6 9.5 L3.4 8.8 L1.9 9.3 L0.9 7.6 L2 6.5 V5.1 L0.9 4 L1.9 2.3 L3.4 2.8 L4.6 2.1Z" stroke-linejoin="round"/>
<circle cx="6" cy="5.85" r="1.9"/></g></svg>
<svg style="left:189.6px;top:248.8px" width="9.40" height="9.40" viewBox="0 0 9.4 9.4" preserveAspectRatio="none"><path d="M0.6 0.6 L8.8 8.8 M8.8 0.6 L0.6 8.8" stroke="#3e444b" stroke-width="1.1"/></svg>
</body></html>
